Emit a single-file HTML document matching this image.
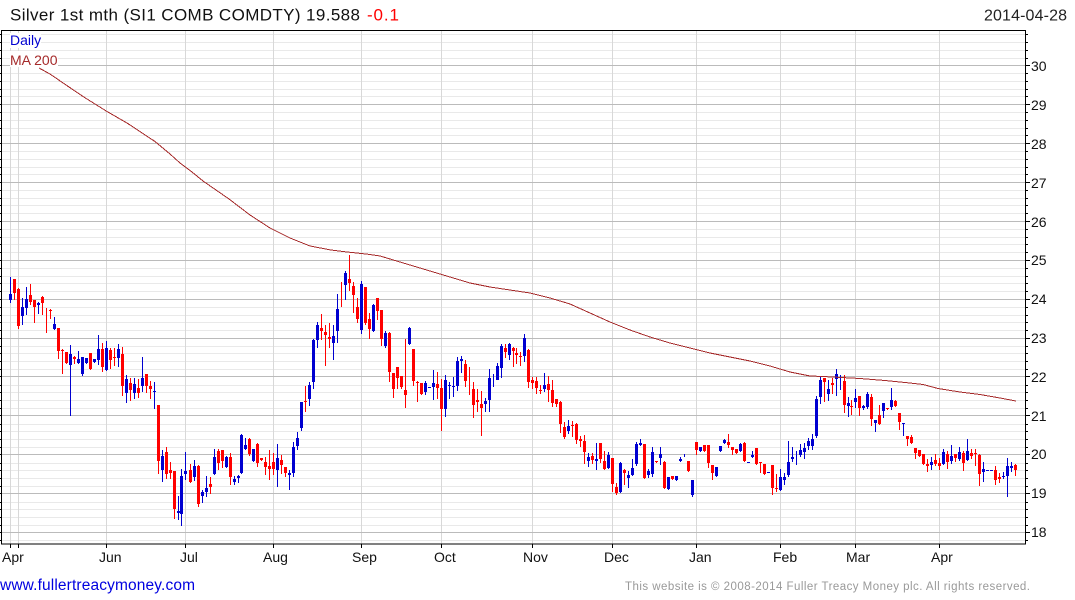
<!DOCTYPE html>
<html><head><meta charset="utf-8"><title>Silver 1st mth</title>
<style>
html,body{margin:0;padding:0;background:#fff;width:1075px;height:600px;overflow:hidden}
svg{display:block}
text{font-family:"Liberation Sans",Arial,sans-serif}
</style></head>
<body>
<svg width="1075" height="600" viewBox="0 0 1075 600" xmlns="http://www.w3.org/2000/svg">
<rect width="1075" height="600" fill="#fff"/>
<g shape-rendering="crispEdges" fill="none">
<path stroke="#e9e9e9" stroke-width="1" d="M2 34.5H1025M2 42.5H1025M2 50.5H1025M2 58.5H1025M2 73.5H1025M2 81.5H1025M2 89.5H1025M2 96.5H1025M2 112.5H1025M2 120.5H1025M2 128.5H1025M2 135.5H1025M2 151.5H1025M2 159.5H1025M2 167.5H1025M2 174.5H1025M2 190.5H1025M2 198.5H1025M2 205.5H1025M2 213.5H1025M2 229.5H1025M2 237.5H1025M2 244.5H1025M2 252.5H1025M2 268.5H1025M2 276.5H1025M2 283.5H1025M2 291.5H1025M2 307.5H1025M2 315.5H1025M2 322.5H1025M2 330.5H1025M2 346.5H1025M2 353.5H1025M2 361.5H1025M2 369.5H1025M2 385.5H1025M2 392.5H1025M2 400.5H1025M2 408.5H1025M2 424.5H1025M2 431.5H1025M2 439.5H1025M2 447.5H1025M2 463.5H1025M2 470.5H1025M2 478.5H1025M2 486.5H1025M2 502.5H1025M2 509.5H1025M2 517.5H1025M2 525.5H1025M2 540.5H1025"/>
<path stroke="#d8d8d8" stroke-width="1" d="M10.5 31V544M18.5 31V544M106.5 31V544M185.5 31V544M273.5 31V544M361.5 31V544M441.5 31V544M532.5 31V544M612.5 31V544M696.5 31V544M780.5 31V544M855.5 31V544M939.5 31V544"/>
<path stroke="#bbb" stroke-width="1" d="M2 65.5H1025M2 104.5H1025M2 143.5H1025M2 182.5H1025M2 221.5H1025M2 260.5H1025M2 299.5H1025M2 338.5H1025M2 376.5H1025M2 415.5H1025M2 454.5H1025M2 493.5H1025M2 532.5H1025"/>
</g>
<rect x="10" y="33" width="31" height="15" fill="#fff"/>
<rect x="10" y="51" width="48" height="16" fill="#fff"/>
<g transform="translate(.5,0)" fill="none" shape-rendering="crispEdges">
<path stroke="#f00" stroke-width="1" d="M14 279V300M18 288V329M30 284V305M34 300V323M42 296V315M46 308V333M50 309V319M58 328V359M62 349V374M66 352V364M74 356V364M90 353V370M102 343V372M110 348V369M114 348V366M122 347V396M130 378V401M138 379V398M146 374V393M150 381V399M158 405V474M166 447V479M170 462V479M174 471V519M190 464V483M198 465V507M210 477V494M218 449V470M222 450V468M230 453V485M249 438V456M257 443V467M261 458V461M265 457V475M269 450V480M273 453V475M281 455V474M285 467V477M305 386V412M321 314V340M325 325V366M329 323V348M341 282V307M349 255V291M353 282V313M357 298V323M365 287V325M369 313V339M377 298V320M381 310V346M389 332V382M393 373V398M397 367V389M401 376V389M405 339V408M413 349V386M417 381V402M421 383V395M437 372V399M441 379V431M465 360V387M469 367V395M473 382V418M477 389V412M481 391V436M505 344V358M513 347V367M516 348V364M520 352V366M528 349V388M532 377V389M536 377V394M540 385V394M548 376V402M552 380V407M556 399V407M560 401V433M564 422V439M572 421V437M576 423V444M580 436V447M584 435V464M592 453V464M600 443V463M604 451V470M612 458V492M616 483V495M624 469V485M644 444V479M656 461V463M664 461V489M672 476V480M688 461V472M696 442V455M704 445V452M708 445V468M712 465V480M728 434V448M732 447V455M736 449V454M744 442V462M756 448V465M760 462V473M764 464V475M772 465V495M776 474V492M824 378V402M832 378V394M844 375V413M851 400V415M859 396V416M871 394V426M879 405V425M887 408V410M895 400V407M899 413V430M907 436V446M911 435V444M915 448V459M919 450V457M923 454V465M927 459V472M935 454V466M939 458V470M947 451V469M955 454V462M963 451V471M971 449V459M975 449V466M979 454V486M995 466V485M999 473V483M1015 464V476"/>
<path stroke="#f00" stroke-width="3" d="M14 279V293M18 289V326M30 295V302M34 300V307M42 297V303M50 310V311M58 328V351M62 350V351M66 352V363M74 357V359M90 353V369M102 349V367M110 350V360M114 357V358M122 354V386M130 383V390M138 388V393M146 374V386M150 386V389M158 405V461M166 452V474M170 470V473M174 471V509M190 470V482M198 466V504M210 484V487M218 451V463M222 450V461M230 457V477M249 439V454M257 444V463M261 458V460M265 462V467M269 466V469M273 462V469M281 460V465M285 467V473M305 401V402M321 328V331M325 332V335M329 337V339M349 279V283M353 286V295M357 307V319M365 287V323M369 319V329M377 298V311M381 310V339M389 333V372M393 373V389M397 367V378M401 376V387M405 390V395M413 349V381M417 382V383M421 383V394M437 384V388M441 388V409M465 364V381M473 389V405M477 400V402M481 404V408M505 348V352M513 348V351M516 353V355M520 356V357M528 350V382M532 380V383M536 381V388M540 390V391M548 384V390M552 390V403M556 399V404M560 402V424M564 427V437M572 425V426M576 424V440M580 439V441M584 441V452M592 456V460M600 443V459M604 461V469M612 458V484M616 487V493M624 470V473M644 444V478M656 461V462M664 462V488M672 476V479M688 461V471M696 442V450M704 445V451M708 445V463M712 465V473M728 442V445M732 447V450M736 449V453M744 443V461M756 448V464M760 462V463M764 464V474M772 465V488M776 488V489M824 378V382M832 383V385M844 381V405M851 406V407M859 396V408M871 397V419M879 415V424M887 408V409M895 401V406M899 413V422M907 436V439M911 437V443M915 448V453M919 450V456M923 454V464M927 464V466M935 460V464M939 463V466M947 454V462M955 454V458M963 453V463M971 453V456M975 453V454M979 455V474M995 470V480M999 477V479M1015 465V470"/>
<path stroke="#0000d0" stroke-width="1" d="M10 277V303M22 298V325M26 287V315M38 302V314M54 317V330M70 345V416M78 351V364M82 357V376M86 358V364M94 359V363M98 335V365M106 341V371M118 344V367M126 375V403M134 378V399M142 357V392M154 382V409M162 450V482M178 496V520M181 469V526M185 452V480M194 460V481M202 490V503M206 476V497M214 449V475M226 456V468M234 476V485M238 475V483M241 434V474M245 438V450M253 449V462M277 444V487M289 470V490M293 442V477M297 432V450M301 402V431M309 382V406M313 339V389M317 322V348M333 325V360M337 294V343M345 271V300M361 281V334M373 304V332M385 331V348M409 327V345M425 381V395M433 370V400M445 375V417M449 382V399M453 377V397M457 357V391M461 356V373M485 398V412M489 369V412M493 374V387M497 363V380M501 344V378M509 343V360M524 334V362M544 373V392M568 420V434M588 453V467M596 443V470M608 452V469M620 462V493M628 471V488M632 459V476M636 442V466M640 439V446M648 469V478M652 447V477M660 447V465M668 477V490M676 476V481M680 457V462M684 454V457M692 480V497M700 447V452M716 467V477M720 446V452M724 439V444M740 443V452M752 451V458M780 469V491M784 473V485M788 441V477M792 447V462M796 451V465M800 444V457M804 443V459M808 438V450M812 434V450M816 396V438M820 377V404M828 380V401M836 369V396M840 375V390M848 397V417M855 389V408M863 405V410M867 392V409M875 420V432M883 403V418M891 388V410M903 423V436M931 457V470M943 449V465M951 445V464M959 447V461M967 439V461M983 462V482M1003 472V479M1007 458V497M1011 462V472"/>
<path stroke="#0000d0" stroke-width="3" d="M10 294V300M22 307V316M26 299V308M38 303V305M54 324V329M70 354V365M78 359V363M82 357V374M86 358V363M94 359V362M98 349V360M106 348V370M118 349V358M126 379V393M134 384V393M142 378V386M154 391V392M162 456V470M178 511V513M181 476V514M185 471V474M194 466V477M202 492V496M206 488V492M214 457V474M226 457V467M234 479V482M238 476V478M241 435V473M245 445V449M253 449V461M277 458V470M289 473V475M293 447V473M297 438V446M301 402V428M309 385V399M313 340V382M317 325V340M333 336V343M337 309V331M345 273V285M361 284V330M373 305V331M385 333V346M409 328V344M425 383V392M429 387V388M433 383V387M445 380V409M449 385V386M453 386V387M457 361V386M461 359V361M485 401V404M489 378V400M497 366V380M501 346V368M509 344V355M524 338V356M544 385V389M568 426V431M588 457V461M596 459V461M608 455V468M620 463V492M628 475V478M632 468V475M636 444V464M640 443V445M648 471V475M652 452V474M660 454V458M668 477V489M676 476V480M680 459V461M692 480V495M700 447V451M716 467V476M720 446V451M724 440V443M740 444V451M748 462V463M752 455V457M768 472V473M780 477V490M784 477V480M788 462V475M792 457V459M800 450V455M804 448V452M808 441V446M812 439V446M816 399V436M820 380V397M828 389V394M836 374V379M848 403V406M855 398V402M863 406V408M867 394V407M875 420V423M883 403V411M891 400V407M903 423V424M931 462V465M943 452V464M951 456V461M959 452V459M967 451V460M983 469V472M987 470V471M991 470V471M1003 476V477M1007 466V476M1011 466V468"/>
</g>
<polyline fill="none" stroke="#a52a2a" stroke-width="1" shape-rendering="crispEdges" points="39,68 50,74 69,87 83,96.5 107,111.5 127,123 155,141.5 170,154 180,163 192,172 203,181 229,199 250,215 270,228 290,238 310,246 331,250 347,252 357,253 370,254.5 380,256 390,259 400,262 420,268 440,274 470,283 490,287 510,290 530,293 550,298 570,304 590,313 610,322 630,330 650,337 670,343 690,348 710,353 730,357 750,361 770,366 790,372 800,374 810,376 823,376.5 860,378.5 885,380.5 905,382.5 923,384.5 938,388.5 960,392 980,394.5 1000,398 1016,401"/>
<g shape-rendering="crispEdges" fill="none" stroke="#000">
<rect x="1.5" y="30.5" width="1024" height="513.5" stroke-width="1"/>
<path stroke-width="1" d="M1026 34.5H1028M1026 42.5H1028M1026 50.5H1028M1026 58.5H1028M1026 65.5H1030M1026 73.5H1028M1026 81.5H1028M1026 89.5H1028M1026 96.5H1028M1026 104.5H1030M1026 112.5H1028M1026 120.5H1028M1026 128.5H1028M1026 135.5H1028M1026 143.5H1030M1026 151.5H1028M1026 159.5H1028M1026 167.5H1028M1026 174.5H1028M1026 182.5H1030M1026 190.5H1028M1026 198.5H1028M1026 205.5H1028M1026 213.5H1028M1026 221.5H1030M1026 229.5H1028M1026 237.5H1028M1026 244.5H1028M1026 252.5H1028M1026 260.5H1030M1026 268.5H1028M1026 276.5H1028M1026 283.5H1028M1026 291.5H1028M1026 299.5H1030M1026 307.5H1028M1026 315.5H1028M1026 322.5H1028M1026 330.5H1028M1026 338.5H1030M1026 346.5H1028M1026 353.5H1028M1026 361.5H1028M1026 369.5H1028M1026 376.5H1030M1026 385.5H1028M1026 392.5H1028M1026 400.5H1028M1026 408.5H1028M1026 415.5H1030M1026 424.5H1028M1026 431.5H1028M1026 439.5H1028M1026 447.5H1028M1026 454.5H1030M1026 463.5H1028M1026 470.5H1028M1026 478.5H1028M1026 486.5H1028M1026 493.5H1030M1026 502.5H1028M1026 509.5H1028M1026 517.5H1028M1026 525.5H1028M1026 532.5H1030M1026 540.5H1028"/>
<path stroke-width="1" d="M0 34.5H1M0 42.5H1M0 50.5H1M0 58.5H1M0 65.5H1M0 73.5H1M0 81.5H1M0 89.5H1M0 96.5H1M0 104.5H1M0 112.5H1M0 120.5H1M0 128.5H1M0 135.5H1M0 143.5H1M0 151.5H1M0 159.5H1M0 167.5H1M0 174.5H1M0 182.5H1M0 190.5H1M0 198.5H1M0 205.5H1M0 213.5H1M0 221.5H1M0 229.5H1M0 237.5H1M0 244.5H1M0 252.5H1M0 260.5H1M0 268.5H1M0 276.5H1M0 283.5H1M0 291.5H1M0 299.5H1M0 307.5H1M0 315.5H1M0 322.5H1M0 330.5H1M0 338.5H1M0 346.5H1M0 353.5H1M0 361.5H1M0 369.5H1M0 376.5H1M0 385.5H1M0 392.5H1M0 400.5H1M0 408.5H1M0 415.5H1M0 424.5H1M0 431.5H1M0 439.5H1M0 447.5H1M0 454.5H1M0 463.5H1M0 470.5H1M0 478.5H1M0 486.5H1M0 493.5H1M0 502.5H1M0 509.5H1M0 517.5H1M0 525.5H1M0 532.5H1M0 540.5H1"/>
<path stroke-width="1" d="M10.5 544V548M18.5 544V548M106.5 544V548M185.5 544V548M273.5 544V548M361.5 544V548M441.5 544V548M532.5 544V548M612.5 544V548M696.5 544V548M780.5 544V548M855.5 544V548M939.5 544V548"/>
</g>
<text x="10" y="20.5" font-size="17" fill="#111" textLength="350" lengthAdjust="spacing">Silver 1st mth (SI1 COMB COMDTY) 19.588</text>
<text x="367" y="20.5" font-size="17" fill="#f00" textLength="32" lengthAdjust="spacing">-0.1</text>
<text x="984" y="20.5" font-size="16" fill="#222" textLength="83" lengthAdjust="spacing">2014-04-28</text>
<text x="10" y="45" font-size="14" fill="#0000d0">Daily</text>
<text x="10" y="65" font-size="14" fill="#a52a2a">MA 200</text>
<g font-size="14" fill="#111">
<text x="1031" y="71">30</text><text x="1031" y="110">29</text><text x="1031" y="149">28</text><text x="1031" y="188">27</text><text x="1031" y="227">26</text><text x="1031" y="265">25</text><text x="1031" y="304">24</text><text x="1031" y="343">23</text><text x="1031" y="382">22</text><text x="1031" y="421">21</text><text x="1031" y="459">20</text><text x="1031" y="498">19</text><text x="1031" y="537">18</text>
<text x="2" y="562">Apr</text><text x="99" y="562">Jun</text><text x="180" y="562">Jul</text><text x="263" y="562">Aug</text><text x="352" y="562">Sep</text><text x="434" y="562">Oct</text><text x="523" y="562">Nov</text><text x="604" y="562">Dec</text><text x="689" y="562">Jan</text><text x="773" y="562">Feb</text><text x="846" y="562">Mar</text><text x="931" y="562">Apr</text>
</g>
<text x="0" y="590" font-size="15.5" fill="#0000e0" textLength="195" lengthAdjust="spacing">www.fullertreacymoney.com</text>
<text x="625" y="590" font-size="11.5" fill="#999" textLength="405" lengthAdjust="spacing">This website is © 2008-2014 Fuller Treacy Money plc. All rights reserved.</text>
</svg>
</body></html>
